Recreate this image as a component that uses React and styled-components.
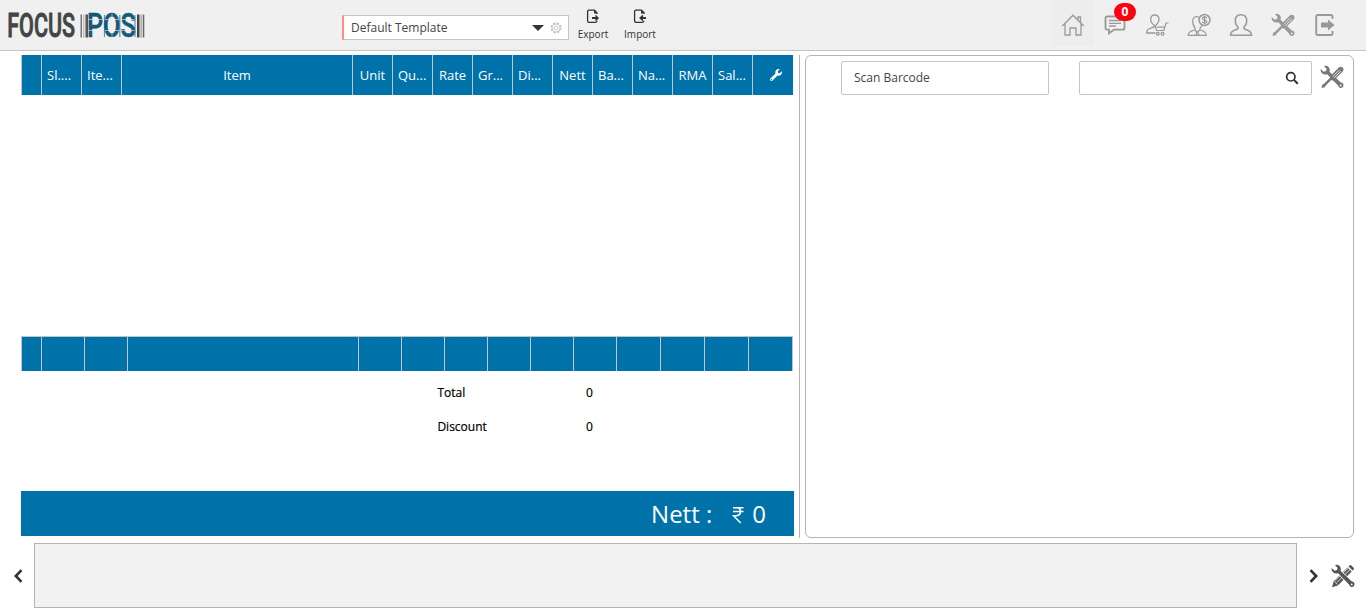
import React from 'react';
import styled, { createGlobalStyle } from 'styled-components';
import { FaWrench } from 'react-icons/fa';

const GlobalStyle = createGlobalStyle`
  * { box-sizing: border-box; }
  body {
    margin: 0;
    background: #fff;
    color: #333;
    font-family: 'Open Sans', sans-serif;
    font-size: 12px;
    overflow: hidden;
  }
`;

const Page = styled.div`
  height: 613px;
  display: flex;
  flex-direction: column;
`;

const Header = styled.header`
  height: 51px;
  flex: none;
  display: flex;
  background: #f0f0f0;
  border-bottom: 1px solid #c4c4c4;
`;

const Brand = styled.div`
  width: 342px;
  padding-left: 6px;

  svg { display: block; overflow: visible; }
`;

const TemplateSelect = styled.div`
  width: 227px;
  height: 25px;
  margin-top: 15px;
  padding: 0 6px;
  display: flex;
  align-items: center;
  background: #fff;
  border: 1px solid #c4c4c4;
  border-left: 2px solid #ff8a8a;
  color: #444;
  font-size: 12px;

  span { flex: 1; padding-left: 1px; }
  svg { display: block; }
`;

const Caret = styled.i`
  border: 6px solid transparent;
  border-top-color: #333;
  border-bottom: 0;
  margin-right: 6px;
`;

const FileActions = styled.div`
  flex: 1;
  display: flex;
  padding: 9px 0 0 8px;
`;

const FileAction = styled.div`
  width: 32px;
  margin-right: 15px;
  display: flex;
  flex-direction: column;
  align-items: center;
  font-size: 10px;
  line-height: 14px;
  color: #333;

  svg { display: block; margin-bottom: 3px; }
`;

const HeaderNav = styled.nav`
  display: flex;
  padding-right: 20px;
`;

const NavItem = styled.div`
  position: relative;
  width: 42px;
  height: 46px;
  display: flex;
  justify-content: center;
  padding-top: 13px;
  background: ${({ $active }) => ($active ? '#ededed' : 'transparent')};
  color: #999;

  svg { display: block; }
`;

const Badge = styled.span`
  position: absolute;
  left: 20px;
  top: 3px;
  width: 22px;
  height: 18px;
  border-radius: 9px;
  background: #ff0013;
  color: #fff;
  font-size: 12px;
  font-weight: 700;
  line-height: 18px;
  text-align: center;
`;

const Workspace = styled.main`
  display: flex;
  height: 487px;
  padding-top: 4px;
  flex: none;
`;

const SalePane = styled.section`
  width: 800px;
  padding-left: 21px;
  border-right: 1px solid #b4b4b4;
`;

const GridHead = styled.div`
  display: flex;
  width: 772px;
  height: 40px;
  background: #0072aa;
`;

const HeadCell = styled.div`
  width: ${({ $w }) => $w}px;
  flex: none;
  display: flex;
  align-items: center;
  justify-content: ${({ $start }) => ($start ? 'flex-start' : 'center')};
  padding-left: ${({ $start, $indent }) => $indent || ($start ? 5 : 0)}px;
  border-left: 1px solid #c4c4c4;
  color: #fff;
  font-size: 13px;
  white-space: nowrap;
`;

const GridBody = styled.div`
  height: 241px;
`;

const GridFoot = styled.div`
  display: flex;
  width: 772px;
  height: 35px;
  background: #0072aa;
  border-top: 1px solid #c4c4c4;
  border-right: 1px solid #c4c4c4;
`;

const FootCell = styled.div`
  width: ${({ $w }) => $w}px;
  flex: none;
  border-left: 1px solid #c4c4c4;
`;

const Totals = styled.dl`
  height: 120px;
  margin: 0;
  padding: 5px 0 0 416.4px;
  color: #000;
  -webkit-text-stroke: 0.2px #000;
`;

const TotalRow = styled.div`
  display: flex;
  height: 34px;
  line-height: 34px;

  dt { width: 148.6px; }
  dd { margin: 0; }
`;

const NettBar = styled.div`
  width: 773px;
  height: 45px;
  display: flex;
  justify-content: flex-end;
  padding-right: 28px;
  background: #0072aa;
  color: #fff;
  font-size: 24px;
  line-height: 46px;
  white-space: pre;
`;

const Amount = styled.span`
  display: flex;
  margin-left: 20px;

  svg { margin: 15px 8px 0 0; }
`;

const ProductPane = styled.section`
  width: 549px;
  margin-left: 5px;
  padding: 5px 9px 0 35px;
  display: flex;
  align-items: flex-start;
  border: 1px solid #b4b4b4;
  border-radius: 6px;
`;

const Field = styled.div`
  width: ${({ $w }) => $w}px;
  height: 34px;
  flex: none;
  display: flex;
  align-items: center;
  justify-content: ${({ $end }) => ($end ? 'flex-end' : 'flex-start')};
  margin-right: ${({ $gap }) => $gap}px;
  padding: 0 12px 1px;
  border: 1px solid #c4c4c4;
  border-radius: 2px;
  color: #444;
`;

const ToolButton = styled.div`
  padding-top: 4px;
  color: #777;

  svg { display: block; }
`;

const Dock = styled.footer`
  display: flex;
  align-items: center;
  padding-top: 5px;
  color: #333;
`;

const Arrow = styled.div`
  width: 34px;
  padding-left: ${({ $pad }) => $pad}px;
  svg { display: block; }
`;

const DockTray = styled.div`
  width: 1263px;
  height: 65px;
  background: #f2f2f2;
  border: 1px solid #b4b4b4;
`;

const DockTools = styled.div`
  color: #555;
  svg { display: block; }
`;

function Logo() {
  const bars = [[74.5, 1.5, '#777'], [77.3, 1, '#aaa'], [79.5, 2.5, '#555'], [131, 2.5, '#444'], [134.6, 1, '#888'], [136.8, 1.5, '#666']];
  return (
    <svg width="146" height="50" viewBox="0 0 146 50">
      <text transform="translate(1.2 36.800) scale(.73 1.060)" fontFamily="Roboto" fontWeight="500" fontSize="31" fill="#444" stroke="#444" strokeWidth=".8" textLength="93" lengthAdjust="spacingAndGlyphs">FOCUS</text>
      {bars.map(([x, w, c]) => <rect key={x} x={x} y="14.5" width={w} height="23" fill={c} />)}
      <text transform="translate(81 37.200) scale(.75 1.060)" fontFamily="Roboto" fontWeight="500" fontSize="31" fill="#155878" stroke="#155878" strokeWidth=".5" textLength="65" lengthAdjust="spacingAndGlyphs">POS</text>
      <path d="M82 19.500h48M82 30.500h48M106 14v24" stroke="#f0f0f0" strokeWidth=".6" />
      <path d="M98.500 15v22M113.800 15v22M129 15v22" stroke="#155878" strokeWidth="1.200" opacity=".6" />
    </svg>
  );
}

function Gear() {
  return (
    <svg width="12" height="12" viewBox="0 0 12 12" fill="none" stroke="#bbb">
      <circle cx="6" cy="6" r="4.900" strokeWidth="1.200" strokeDasharray="2.200 1.650" />
      <circle cx="6" cy="6" r="4" strokeWidth=".8" />
      <circle cx="6" cy="6" r="1.800" strokeWidth=".8" />
    </svg>
  );
}

function FileIcon({ inward }) {
  return (
    <svg width="14" height="15" viewBox="0 0 14 15">
      <path d="M11 5V3.700L8.500 1.200H3Q1.600 1.200 1.600 2.600v9.300q0 1.400 1.400 1.400h6.300q1.700 0 1.700-1.500" fill="none" stroke="#333" strokeWidth="1.300" />
      <path d="M8 1v3.500h3.500z" fill="#333" />
      <path d={inward ? 'M6 9l4-3.500V8H13v2h-3v2.500z' : 'M13 9L9.500 5.500V8H6v2h3.500v2.500z'} fill="#333" />
    </svg>
  );
}

function Wrench({ surface }) {
  return (
    <>
      <path d="M3.900 1Q7.700-.1 9.300 3q.9 1.700.2 3.800L20.800 17.500q2.900.3 2.700 3.100-.3 2.500-2.800 2.500-2 0-2.700-2.500L7.200 9.300Q4.200 10.300 2 8.200.2 6.400.7 4L3.600 6.700 6.100 5.900 6.500 3.700z" stroke={surface} strokeWidth="1.200" paintOrder="stroke" />
      <circle cx="20.700" cy="20.400" r=".9" fill={surface} />
    </>
  );
}

function Tools({ surface = '#fff' }) {
  return (
    <svg width="24" height="24" viewBox="0 0 24 24" fill="currentColor">
      <Wrench surface={surface} />
      <path d="M1.500 23l.8-3.200 2-1.300 6.200-6.200 1.700 1.700L6 20.200l-1.300 2z" />
      <path d="M10.200 11.200l8.600-8.600q2.200-1.800 3.900-.1t0 3.900l-8.600 8.600q-1.700 1-3.100-.3t-.8-3.500z" />
      <path d="M12.800 11.500l6.700-6.700M14.200 12.800l6.700-6.700" stroke={surface} strokeWidth=".8" fill="none" />
    </svg>
  );
}

function PencilTools() {
  return (
    <svg width="24" height="24" viewBox="0 0 24 24" fill="currentColor">
      <path d="M1 23.200l1.700-6L16.500 3.400l4.200 4.200L6.900 21.500zM17.500 2.400l.9-.9q1-.9 2 0l2.200 2.200q.9 1 0 2l-.9.900z" />
      <path d="M4 16.500L17.500 3.800M5.800 18.500L19.500 5.200M3.300 17.500l3.200 3" stroke="#fff" strokeWidth=".8" fill="none" />
      <Wrench surface="#fff" />
    </svg>
  );
}

function Search() {
  return (
    <svg width="14" height="14" viewBox="0 0 14 14" fill="none" stroke="#333">
      <circle cx="5.800" cy="5.800" r="4.200" strokeWidth="1.700" />
      <path d="M9 9l3.800 3.800" strokeWidth="2" />
    </svg>
  );
}

function Home() {
  return (
    <svg width="24" height="24" viewBox="0 0 24 24" fill="none" stroke="currentColor" strokeWidth="1.300">
      <path d="M1.300 13L12 2.200 22.700 13M4 11v11h5v-7h6v7h5V11M17 6.500V4h2.500v5.500" />
    </svg>
  );
}

function Chat() {
  return (
    <svg width="24" height="24" viewBox="0 0 24 24" fill="none" stroke="currentColor" strokeWidth="1.800">
      <path d="M4 3.500h16q1.500 0 1.500 1.500v10q0 1.700-1.500 1.700H11l-5 3.500v-3.500H4Q2.500 16.700 2.500 15V5Q2.500 3.500 4 3.500z" />
      <path d="M6 7.500h12M6 10.300h12M6 13h7" strokeWidth="1.300" />
    </svg>
  );
}

function CustomerCart() {
  return (
    <svg width="24" height="24" viewBox="0 0 24 24" fill="none" stroke="currentColor" strokeWidth="1.300">
      <path d="M10.500 20H1.700Q1.500 16.500 5 15.500q4-1.200 6.500-3.800Q14 9 14 6.500 14 2 9.800 2T5.700 6.500q0 3.500 3.800 6" />
      <path d="M23.500 10H21l-2.200 7.500h-7L9.500 12.500M11.500 14.200h8" strokeWidth="1.200" />
      <circle cx="12.800" cy="20.800" r="1.400" /><circle cx="17.500" cy="20.800" r="1.400" />
    </svg>
  );
}

function CustomerCredit() {
  return (
    <svg width="24" height="24" viewBox="0 0 24 24" fill="none" stroke="currentColor" strokeWidth="1.200">
      <path d="M12 4Q6.500 2.500 5.700 7 5.500 12 8 15v2Q1.200 18 1.200 22.300h18Q19 18 13 17v-2q1.500-1 2-2.500M8 17l2 2.200 3-2.200M10 19l-1 3M10.500 19l1.500 3" />
      <circle cx="17.500" cy="7" r="5.500" strokeWidth="1.500" />
      <path d="M19.800 5q-.5-1.100-2.300-1.100-2 0-2 1.500T17.600 7q2.200.3 2.200 1.700T17.600 10q-1.900 0-2.300-1.200M17.600 2.800v8.400" strokeWidth="1.200" />
    </svg>
  );
}

function Person() {
  return (
    <svg width="24" height="24" viewBox="0 0 24 24" fill="none" stroke="currentColor" strokeWidth="1.500">
      <path d="M9 14Q6.300 12 6.300 7.500 6.500 1.800 12 1.800t5.700 5.700Q17.700 12 15 14q-.5 2 1.500 2.500 6 1.500 6 5.700h-21q0-4.200 6-5.700Q9.500 16 9 14z" />
    </svg>
  );
}

function Exit() {
  return (
    <svg width="24" height="24" viewBox="0 0 24 24">
      <path d="M19.500 6V3.800Q19.500 2 17.700 2H5Q3.200 2 3.200 3.800v16.400Q3.200 22 5 22h12.700q1.800 0 1.800-1.800V18" fill="none" stroke="currentColor" strokeWidth="1.900" />
      <path d="M21.500 12l-6.500-5.500v3H8v5h7v3z" fill="currentColor" />
    </svg>
  );
}

function Chevron({ right }) {
  return (
    <svg width="12" height="14" viewBox="0 0 12 14" fill="none" stroke="currentColor" strokeWidth="2.600">
      <path d={right ? 'M2.500 1.200l5.700 5.800-5.700 5.800' : 'M9.500 1.200L3.800 7l5.700 5.800'} />
    </svg>
  );
}

function Rupee() {
  return (
    <svg width="12" height="18" viewBox="0 0 12 18" fill="none" stroke="currentColor" strokeWidth="1.600">
      <path d="M1 1.800h10.500M1 5.500h10.500M1 1.800h3.500Q8.500 1.800 8.500 5.500T4.500 9.700H1.500l7.200 7.300" />
    </svg>
  );
}

const columns = [
  { w: 20 },
  { label: 'Sl....', w: 40, start: true },
  { label: 'Ite...', w: 40, start: true },
  { label: 'Item', w: 231 },
  { label: 'Unit', w: 40 },
  { label: 'Qu...', w: 40, start: true },
  { label: 'Rate', w: 40 },
  { label: 'Gr...', w: 40, start: true },
  { label: 'Di...', w: 40, start: true },
  { label: 'Nett', w: 40 },
  { label: 'Ba...', w: 40, start: true },
  { label: 'Na...', w: 40, start: true },
  { label: 'RMA', w: 40 },
  { label: 'Sal...', w: 40, start: true },
  { label: <FaWrench size={12} />, w: 41, indent: 6 },
];

const footWidths = [20, 43, 43, 231, 43, 43, 43, 43, 43, 43, 44, 44, 44, 44];

export default function App() {
  return (
    <Page>
      <GlobalStyle />
      <Header>
        <Brand><Logo /></Brand>
        <TemplateSelect><span>Default Template</span><Caret /><Gear /></TemplateSelect>
        <FileActions>
          <FileAction><FileIcon />Export</FileAction>
          <FileAction><FileIcon inward />Import</FileAction>
        </FileActions>
        <HeaderNav>
          <NavItem $active><Home /></NavItem>
          <NavItem><Chat /><Badge>0</Badge></NavItem>
          <NavItem><CustomerCart /></NavItem>
          <NavItem><CustomerCredit /></NavItem>
          <NavItem><Person /></NavItem>
          <NavItem><Tools surface="#f0f0f0" /></NavItem>
          <NavItem><Exit /></NavItem>
        </HeaderNav>
      </Header>
      <Workspace>
        <SalePane>
          <GridHead>
            {columns.map((c, i) => <HeadCell key={i} $w={c.w} $start={c.start} $indent={c.indent}>{c.label}</HeadCell>)}
          </GridHead>
          <GridBody />
          <GridFoot>
            {footWidths.map((w, i) => <FootCell key={i} $w={w} />)}
          </GridFoot>
          <Totals>
            <TotalRow><dt>Total</dt><dd>0</dd></TotalRow>
            <TotalRow><dt>Discount</dt><dd>0</dd></TotalRow>
          </Totals>
          <NettBar>Nett :<Amount><Rupee />0</Amount></NettBar>
        </SalePane>
        <ProductPane>
          <Field $w={208} $gap={30}>Scan Barcode</Field>
          <Field $w={233} $gap={8} $end><Search /></Field>
          <ToolButton><Tools /></ToolButton>
        </ProductPane>
      </Workspace>
      <Dock>
        <Arrow $pad={12}><Chevron /></Arrow>
        <DockTray />
        <Arrow $pad={11}><Chevron right /></Arrow>
        <DockTools><PencilTools /></DockTools>
      </Dock>
    </Page>
  );
}
